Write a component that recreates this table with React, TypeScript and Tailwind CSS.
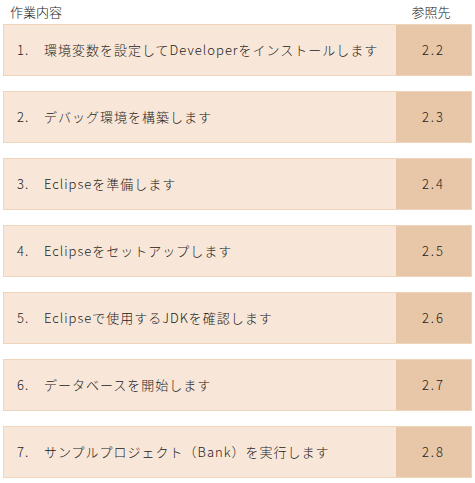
import React from 'react';

const steps = [
    { no: '1.', text: '環境変数を設定してDeveloperをインストールします', ref: '2.2' },
    { no: '2.', text: 'デバッグ環境を構築します', ref: '2.3' },
    { no: '3.', text: 'Eclipseを準備します', ref: '2.4' },
    { no: '4.', text: 'Eclipseをセットアップします', ref: '2.5' },
    { no: '5.', text: 'Eclipseで使用するJDKを確認します', ref: '2.6' },
    { no: '6.', text: 'データベースを開始します', ref: '2.7' },
    { no: '7.', text: 'サンプルプロジェクト（Bank）を実行します', ref: '2.8' },
];

export default function App() {
    return (
        <div
            className="w-[475px] h-[483px] bg-white text-[#222] text-[13px] font-light px-[3px]"
            style={{ fontFamily: '"Noto Sans CJK JP", sans-serif' }}
        >
            <div className="flex h-[24px] items-center">
                <div className="flex-1 pl-[7px]">作業内容</div>
                <div className="w-[76px] text-center pr-[6px]">参照先</div>
            </div>
            <div className="flex flex-col gap-[15px]">
                {steps.map((s) => (
                    <div key={s.no} className="flex h-[52px] w-[469px] border border-[#f0d5bd]">
                        <div className="flex-1 flex items-center bg-[#f8e7d8] pl-[13px] tracking-[1px]">
                            <span className="w-[27px]">{s.no}</span>
                            <span>{s.text}</span>
                        </div>
                        <div className="w-[75px] flex items-center justify-center bg-[#e8c7a8] tracking-[2px]">
                            {s.ref}
                        </div>
                    </div>
                ))}
            </div>
        </div>
    );
}
